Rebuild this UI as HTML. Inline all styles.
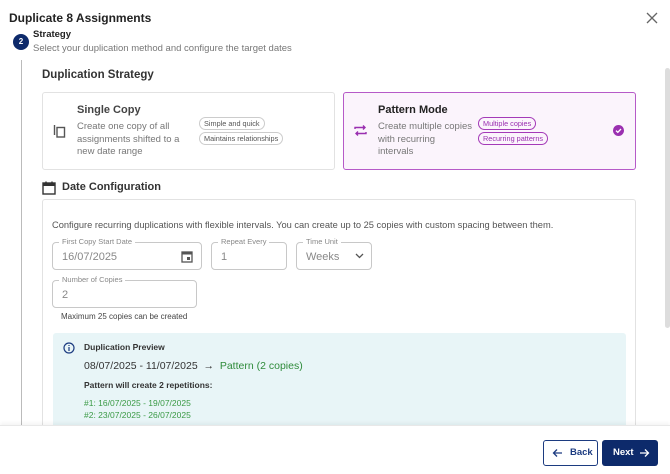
<!DOCTYPE html>
<html><head><meta charset="utf-8"><style>
*{box-sizing:border-box;margin:0;padding:0}
body{width:670px;height:474px;overflow:hidden;background:#fff;font-family:"Liberation Sans",sans-serif;color:#222;position:relative}
.a{position:absolute}
.chip{position:absolute;font-size:7.3px;border:1px solid #ccc;border-radius:8px;padding:1px 4px;color:#555;white-space:nowrap}
.pchip{border-color:#a43ab8;color:#9a2fb0}
.fld{position:absolute;border:1px solid #c8c8c8;border-radius:4px;height:28px}
.lbl{position:absolute;top:-6px;left:6px;background:#fff;padding:0 3px;font-size:7.5px;color:#888}
.val{position:absolute;left:9px;top:8px;font-size:11px;color:#888}
</style></head><body>
<div class="a" style="left:9px;top:11px;font-size:12px;font-weight:bold">Duplicate 8 Assignments</div>
<svg class="a" style="left:646px;top:12px" width="12" height="12" viewBox="0 0 12 12"><path d="M1 1L11 11M11 1L1 11" stroke="#666" stroke-width="1.3"/></svg>
<div class="a" style="left:13px;top:34px;width:16px;height:16px;border-radius:50%;background:#0d2a6b;color:#fff;font-size:8px;font-weight:bold;text-align:center;line-height:16px">2</div>
<div class="a" style="left:33px;top:29px;font-size:9.5px;font-weight:bold">Strategy</div>
<div class="a" style="left:33px;top:43px;font-size:9.5px;color:#777">Select your duplication method and configure the target dates</div>
<div class="a" style="left:21px;top:60px;width:1px;height:365px;background:#bbb"></div>
<div class="a" style="left:665px;top:68px;width:5px;height:260px;background:#ddd;border-radius:3px"></div>
<div class="a" style="left:42px;top:69px;font-size:11.5px;font-weight:bold;color:#333">Duplication Strategy</div>

<div class="a" style="left:42px;top:92px;width:293px;height:78px;border:1px solid #e2e2e2;border-radius:3px"></div>
<svg class="a" style="left:53px;top:124px" width="13" height="14" viewBox="0 0 13 14"><path d="M1.5 1V11" stroke="#555" stroke-width="1.4" fill="none"/><rect x="4" y="3.5" width="7.5" height="9.5" fill="none" stroke="#555" stroke-width="1.4"/></svg>
<div class="a" style="left:77px;top:104px;font-size:11px;font-weight:bold;color:#444">Single Copy</div>
<div class="a" style="left:77px;top:121px;font-size:9.5px;line-height:12.5px;color:#777;width:105px">Create one copy of all assignments shifted to a new date range</div>
<div class="chip" style="left:199px;top:117px">Simple and quick</div>
<div class="chip" style="left:199px;top:132px">Maintains relationships</div>

<div class="a" style="left:343px;top:92px;width:293px;height:78px;border:1px solid #b65ac8;border-radius:3px;background:#fbf4fc"></div>
<svg class="a" style="left:354px;top:124px" width="13" height="13" viewBox="0 0 13 13"><path d="M1 5V3.5H11M9 1.5L11 3.5L9 5.5M12 8V9.5H2M4 7.5L2 9.5L4 11.5" fill="none" stroke="#9a2fb0" stroke-width="1.4"/></svg>
<div class="a" style="left:378px;top:104px;font-size:11px;font-weight:bold;color:#222">Pattern Mode</div>
<div class="a" style="left:378px;top:121px;font-size:9.5px;line-height:12.5px;color:#777;width:94px">Create multiple copies with recurring intervals</div>
<div class="chip pchip" style="left:478px;top:117px">Multiple copies</div>
<div class="chip pchip" style="left:478px;top:132px">Recurring patterns</div>
<svg class="a" style="left:613px;top:125px" width="11" height="11" viewBox="0 0 11 11"><circle cx="5.5" cy="5.5" r="5.5" fill="#9a2fb0"/><path d="M3 5.6L4.8 7.3L8 4" fill="none" stroke="#fff" stroke-width="1.3"/></svg>

<svg class="a" style="left:42px;top:181px" width="14" height="14" viewBox="0 0 14 14"><rect x="1" y="2" width="12" height="11" fill="none" stroke="#333" stroke-width="1.4"/><rect x="1" y="2" width="12" height="3" fill="#333"/><path d="M4 0.5V3M10 0.5V3" stroke="#333" stroke-width="1.4"/></svg>
<div class="a" style="left:62px;top:181px;font-size:11px;font-weight:bold;color:#333">Date Configuration</div>
<div class="a" style="left:42px;top:199px;width:594px;height:240px;border:1px solid #e2e2e2;border-radius:3px"></div>
<div class="a" style="left:52px;top:220px;font-size:9.3px;color:#555">Configure recurring duplications with flexible intervals. You can create up to 25 copies with custom spacing between them.</div>
<div class="fld" style="left:52px;top:242px;width:150px"><span class="lbl">First Copy Start Date</span><span class="val">16/07/2025</span>
<svg class="a" style="left:128px;top:7px" width="12" height="13" viewBox="0 0 12 13"><rect x="1" y="2" width="10" height="10" fill="none" stroke="#555" stroke-width="1.3"/><rect x="1" y="2" width="10" height="2.5" fill="#555"/><rect x="6" y="7" width="3" height="3" fill="#555"/></svg></div>
<div class="fld" style="left:211px;top:242px;width:76px"><span class="lbl">Repeat Every</span><span class="val">1</span></div>
<div class="fld" style="left:296px;top:242px;width:76px"><span class="lbl">Time Unit</span><span class="val">Weeks</span>
<svg class="a" style="left:58px;top:10px" width="9" height="6" viewBox="0 0 9 6"><path d="M1 1L4.5 4.5L8 1" fill="none" stroke="#555" stroke-width="1.3"/></svg></div>
<div class="fld" style="left:52px;top:280px;width:145px"><span class="lbl">Number of Copies</span><span class="val">2</span></div>
<div class="a" style="left:61px;top:312px;font-size:8px;color:#444">Maximum 25 copies can be created</div>

<div class="a" style="left:53px;top:333px;width:573px;height:100px;background:#e8f5f7;border-radius:3px"></div>
<svg class="a" style="left:63px;top:342px" width="12" height="12" viewBox="0 0 12 12"><circle cx="6" cy="6" r="5" fill="none" stroke="#1c3b80" stroke-width="1.2"/><path d="M6 5V9M6 3V4" stroke="#1c3b80" stroke-width="1.2"/></svg>
<div class="a" style="left:84px;top:342px;font-size:8.5px;font-weight:bold;color:#333">Duplication Preview</div>
<div class="a" style="left:84px;top:360px;font-size:10.5px;color:#333">08/07/2025 - 11/07/2025 &nbsp;<span style="color:#333">→</span>&nbsp; <span style="color:#2e8b3a">Pattern (2 copies)</span></div>
<div class="a" style="left:84px;top:380px;font-size:8.5px;font-weight:bold;color:#333">Pattern will create 2 repetitions:</div>
<div class="a" style="left:84px;top:397px;font-size:8.5px;line-height:12px;color:#3a9a45">#1: 16/07/2025 - 19/07/2025<br>#2: 23/07/2025 - 26/07/2025</div>

<div class="a" style="left:0;top:425px;width:670px;height:49px;background:#fff;border-top:1px solid #e8e8e8;box-shadow:0 -2px 4px rgba(0,0,0,0.05)"></div>
<div class="a" style="left:543px;top:440px;width:55px;height:26px;border:1px solid #1c3b80;border-radius:3px;color:#1c3b80;font-size:9.5px;font-weight:bold;line-height:24px;padding-left:26px">Back
<svg class="a" style="left:8px;top:7px" width="11" height="10" viewBox="0 0 11 10"><path d="M10 5H1.5M5 1.5L1.5 5L5 8.5" fill="none" stroke="#1c3b80" stroke-width="1.3"/></svg></div>
<div class="a" style="left:602px;top:440px;width:56px;height:26px;background:#0d2a6b;border-radius:3px;color:#fff;font-size:9.5px;font-weight:bold;line-height:26px;padding-left:11px">Next
<svg class="a" style="left:37px;top:8px" width="11" height="10" viewBox="0 0 11 10"><path d="M1 5H9.5M6 1.5L9.5 5L6 8.5" fill="none" stroke="#fff" stroke-width="1.3"/></svg></div>
</body></html>
